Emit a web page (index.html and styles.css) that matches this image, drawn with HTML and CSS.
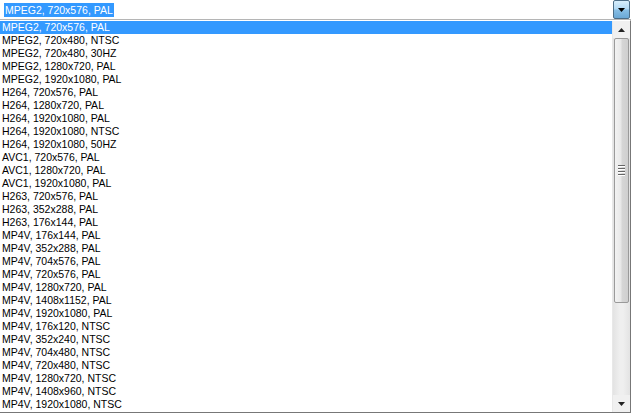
FILE: index.html
```html
<!DOCTYPE html>
<html>
<head>
<meta charset="utf-8">
<link rel="stylesheet" href="styles.css">
</head>
<body>
<div class="screen">
  <div class="combo">
    <div class="field"><span class="sel">MPEG2, 720x576, PAL</span></div>
    <div class="drop-btn">
      <svg width="7" height="4" viewBox="0 0 7 4"><path d="M0 0H7L3.5 4Z" fill="#000"/></svg>
    </div>
  </div>
  <div class="list">
    <ul class="items">
      <li class="active">MPEG2, 720x576, PAL</li>
      <li>MPEG2, 720x480, NTSC</li>
      <li>MPEG2, 720x480, 30HZ</li>
      <li>MPEG2, 1280x720, PAL</li>
      <li>MPEG2, 1920x1080, PAL</li>
      <li>H264, 720x576, PAL</li>
      <li>H264, 1280x720, PAL</li>
      <li>H264, 1920x1080, PAL</li>
      <li>H264, 1920x1080, NTSC</li>
      <li>H264, 1920x1080, 50HZ</li>
      <li>AVC1, 720x576, PAL</li>
      <li>AVC1, 1280x720, PAL</li>
      <li>AVC1, 1920x1080, PAL</li>
      <li>H263, 720x576, PAL</li>
      <li>H263, 352x288, PAL</li>
      <li>H263, 176x144, PAL</li>
      <li>MP4V, 176x144, PAL</li>
      <li>MP4V, 352x288, PAL</li>
      <li>MP4V, 704x576, PAL</li>
      <li>MP4V, 720x576, PAL</li>
      <li>MP4V, 1280x720, PAL</li>
      <li>MP4V, 1408x1152, PAL</li>
      <li>MP4V, 1920x1080, PAL</li>
      <li>MP4V, 176x120, NTSC</li>
      <li>MP4V, 352x240, NTSC</li>
      <li>MP4V, 704x480, NTSC</li>
      <li>MP4V, 720x480, NTSC</li>
      <li>MP4V, 1280x720, NTSC</li>
      <li>MP4V, 1408x960, NTSC</li>
      <li>MP4V, 1920x1080, NTSC</li>
    </ul>
    <div class="scrollbar">
      <div class="sb-btn">
        <svg width="7" height="4" viewBox="0 0 7 4"><path d="M3.5 0L7 4H0Z" fill="#222"/></svg>
      </div>
      <div class="track">
        <div class="thumb">
          <div class="grip"><span></span><span></span><span></span><span></span></div>
        </div>
      </div>
      <div class="sb-btn">
        <svg width="7" height="4" viewBox="0 0 7 4"><path d="M0 0H7L3.5 4Z" fill="#222"/></svg>
      </div>
    </div>
  </div>
</div>
</body>
</html>
```

FILE: styles.css
```css
html, body {
  margin: 0;
  padding: 0;
  background: #ffffff;
}
.screen {
  width: 631px;
  height: 414px;
  overflow: hidden;
  font-family: "Liberation Sans", Arial, sans-serif;
  font-size: 10.5px;
  color: #000;
  background: #fff;
}
.combo {
  display: flex;
  height: 19px;
  border-bottom: 1px solid #b5b5b5;
}
.field {
  flex: 1;
  display: flex;
  align-items: center;
  padding-left: 4px;
}
.sel {
  background: #3399ff;
  color: #fff;
  line-height: 14px;
  padding: 0 1px;
}
.drop-btn {
  width: 15px;
  height: 17px;
  margin-right: 1px;
  border: 1px solid #4d6d86;
  border-radius: 2px;
  background: linear-gradient(#d8eefb 0%, #b4daf4 45%, #86bde4 55%, #6aa8d6 100%);
  display: flex;
  align-items: center;
  justify-content: center;
}
.list {
  display: flex;
  height: 391px;
  border-top: 1px solid #ffffff;
  border-right: 1px solid #777;
  border-bottom: 1px solid #777;
}
.items {
  flex: 1;
  list-style: none;
  margin: 0;
  padding: 0;
}
.items li {
  height: 13px;
  line-height: 13px;
  padding-left: 2px;
  white-space: nowrap;
}
.items li.active {
  background: #3399ff;
  color: #fff;
}
.scrollbar {
  width: 17px;
  display: flex;
  flex-direction: column;
  background: linear-gradient(90deg, #e3e3e3, #efefef 40%, #efefef 60%, #e3e3e3);
  border-left: 1px solid #e8e8e8;
}
.sb-btn {
  height: 17px;
  display: flex;
  align-items: center;
  justify-content: center;
  background: #f0f0f0;
}
.track {
  flex: 1;
  display: flex;
  flex-direction: column;
}
.thumb {
  height: 263px;
  margin: 0 1px;
  border: 1px solid #9a9a9a;
  border-radius: 2px;
  background: linear-gradient(90deg, #f2f2f2 0%, #e8e8e8 45%, #d6d6d6 55%, #cfcfcf 100%);
  display: flex;
  align-items: center;
  justify-content: center;
}
.grip {
  display: flex;
  flex-direction: column;
  gap: 1px;
}
.grip span {
  display: block;
  width: 7px;
  height: 1px;
  background: #666;
  border-bottom: 1px solid #fff;
}
```
